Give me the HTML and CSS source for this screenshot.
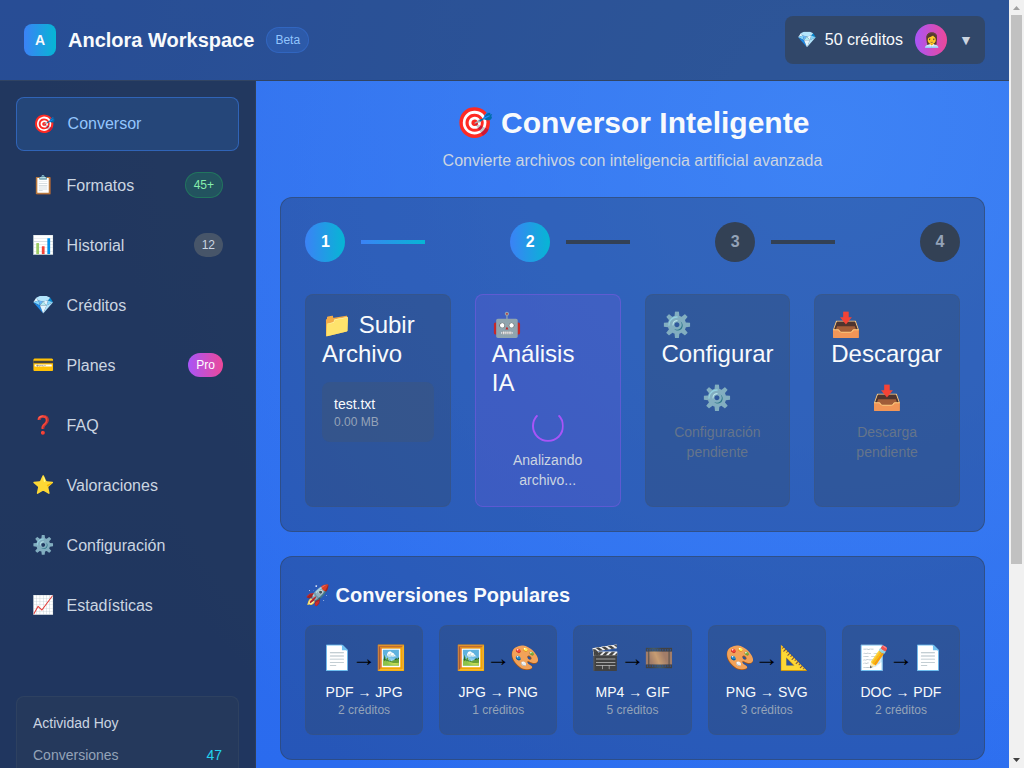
FILE: index.html
```html
<!DOCTYPE html>
<html lang="es">
<head>
<meta charset="utf-8">
<title>Anclora Workspace</title>
<link rel="stylesheet" href="styles.css">
</head>
<body>
<div class="window">
<div class="app">
  <header class="topbar">
    <div class="brand">
      <span class="logo">A</span>
      <span class="brand-name">Anclora Workspace</span>
      <span class="beta">Beta</span>
    </div>
    <div class="account">
      <span class="gem">💎</span>
      <span class="credits">50 créditos</span>
      <span class="avatar">👩‍💼</span>
      <span class="caret">▼</span>
    </div>
  </header>
  <div class="columns">
    <aside class="sidebar">
      <nav class="nav">
        <a class="nav-item active"><span class="nav-icon">🎯</span><span class="nav-label">Conversor</span></a>
        <a class="nav-item"><span class="nav-icon">📋</span><span class="nav-label">Formatos</span><span class="tag tag-green">45+</span></a>
        <a class="nav-item"><span class="nav-icon">📊</span><span class="nav-label">Historial</span><span class="tag tag-gray">12</span></a>
        <a class="nav-item"><span class="nav-icon">💎</span><span class="nav-label">Créditos</span></a>
        <a class="nav-item"><span class="nav-icon">💳</span><span class="nav-label">Planes</span><span class="tag tag-pro">Pro</span></a>
        <a class="nav-item"><span class="nav-icon">❓</span><span class="nav-label">FAQ</span></a>
        <a class="nav-item"><span class="nav-icon">⭐</span><span class="nav-label">Valoraciones</span></a>
        <a class="nav-item"><span class="nav-icon">⚙️</span><span class="nav-label">Configuración</span></a>
        <a class="nav-item"><span class="nav-icon">📈</span><span class="nav-label">Estadísticas</span></a>
      </nav>
      <section class="activity">
        <h3 class="activity-title">Actividad Hoy</h3>
        <div class="activity-row"><span>Conversiones</span><span class="activity-value">47</span></div>
      </section>
    </aside>
    <main class="main">
      <div class="intro">
        <h1 class="title">🎯 Conversor Inteligente</h1>
        <p class="subtitle">Convierte archivos con inteligencia artificial avanzada</p>
      </div>
      <section class="panel">
        <div class="steps">
          <div class="step"><span class="dot on">1</span><span class="bar on"></span></div>
          <div class="step"><span class="dot on">2</span><span class="bar"></span></div>
          <div class="step"><span class="dot">3</span><span class="bar"></span></div>
          <div class="step"><span class="dot">4</span></div>
        </div>
        <div class="stages">
          <div class="card stage">
            <h2 class="stage-title">📁 Subir Archivo</h2>
            <div class="file"><div class="file-name">test.txt</div><div class="file-size">0.00 MB</div></div>
          </div>
          <div class="card stage current">
            <h2 class="stage-title">🤖 Análisis IA</h2>
            <div class="spinner"></div>
            <p class="stage-note light">Analizando archivo...</p>
          </div>
          <div class="card stage">
            <h2 class="stage-title">⚙️ Configurar</h2>
            <div class="stage-icon">⚙️</div>
            <p class="stage-note">Configuración pendiente</p>
          </div>
          <div class="card stage">
            <h2 class="stage-title">📥 Descargar</h2>
            <div class="stage-icon">📥</div>
            <p class="stage-note">Descarga pendiente</p>
          </div>
        </div>
      </section>
      <section class="panel popular">
        <h2 class="popular-title">🚀 Conversiones Populares</h2>
        <div class="popular-grid">
          <div class="card conv"><div class="conv-icons">📄→🖼️</div><div class="conv-name">PDF → JPG</div><div class="conv-cost">2 créditos</div></div>
          <div class="card conv"><div class="conv-icons">🖼️→🎨</div><div class="conv-name">JPG → PNG</div><div class="conv-cost">1 créditos</div></div>
          <div class="card conv"><div class="conv-icons">🎬→🎞️</div><div class="conv-name">MP4 → GIF</div><div class="conv-cost">5 créditos</div></div>
          <div class="card conv"><div class="conv-icons">🎨→📐</div><div class="conv-name">PNG → SVG</div><div class="conv-cost">3 créditos</div></div>
          <div class="card conv"><div class="conv-icons">📝→📄</div><div class="conv-name">DOC → PDF</div><div class="conv-cost">2 créditos</div></div>
        </div>
      </section>
    </main>
  </div>
</div>
<div class="scrollbar">
  <svg class="sb-arrow" width="15" height="15" viewBox="0 0 15 15"><path d="M4 10 7.5 6 11 10z" fill="#a0a0a0"/></svg>
  <span class="sb-thumb"></span>
  <svg class="sb-arrow" width="15" height="15" viewBox="0 0 15 15"><path d="M4 5 11 5 7.5 9z" fill="#404040"/></svg>
</div>
</div>
</body>
</html>
```
FILE: styles.css
```css
* { box-sizing: border-box; margin: 0; padding: 0; }
body { overflow: hidden; font: 16px/24px "Liberation Sans", Arial, sans-serif; color: #f8fafc; }
.window { display: flex; height: 768px; overflow: hidden; }
.app {
  flex: 1;
  min-width: 0;
  display: flex;
  flex-direction: column;
  background: radial-gradient(circle at 82% 18%, rgba(64, 134, 246, .85) 0, rgba(64, 134, 246, 0) 76%), linear-gradient(180deg, #3271ee, #2a6bee);
}
.topbar {
  display: flex;
  flex: none;
  justify-content: space-between;
  align-items: center;
  height: 81px;
  padding: 0 24px;
  background: rgba(30, 41, 59, .5);
  border-bottom: 1px solid rgba(51, 65, 85, .8);
}
.brand { display: flex; align-items: center; gap: 12px; }
.logo {
  width: 32px; height: 32px;
  border-radius: 8px;
  background: linear-gradient(90deg, #3b82f6, #06b6d4);
  font-size: 14px; font-weight: 700; line-height: 32px;
  text-align: center;
}
.brand-name { font-size: 20px; font-weight: 700; line-height: 28px; }
.beta {
  padding: 4px 8px;
  border: 1px solid rgba(59, 130, 246, .3);
  border-radius: 999px;
  background: rgba(59, 130, 246, .2);
  color: #93c5fd;
  font-size: 12px; line-height: 16px;
}
.account {
  display: flex;
  align-items: center;
  height: 48px;
  padding: 0 12px;
  border-radius: 8px;
  background: rgba(51, 65, 85, .7);
}
.gem { width: 20px; margin-right: 8px; }
.avatar {
  width: 32px; height: 32px;
  margin: 0 12px;
  border-radius: 50%;
  background: linear-gradient(90deg, #a855f7, #ec4899);
  font-size: 14px; line-height: 32px;
  text-align: center;
}
.caret { width: 14px; color: #cbd5e1; font-size: 14px; text-align: center; }
.columns { display: flex; flex: 1; min-height: 0; }
.sidebar {
  flex: none;
  display: flex;
  flex-direction: column;
  justify-content: space-between;
  width: 256px;
  padding: 16px;
  background: rgba(30, 41, 59, .8);
  border-right: 1px solid rgba(51, 65, 85, .8);
}
.nav { display: flex; flex-direction: column; gap: 8px; }
.nav-item {
  display: flex;
  align-items: center;
  gap: 12.6px;
  height: 52px;
  padding: 0 16px;
  border-radius: 8px;
  color: #cbd5e1;
}
.nav-item.active {
  height: 54px;
  border: 1px solid rgba(59, 130, 246, .5);
  background: rgba(48, 128, 226, .2);
  color: #93c5fd;
}
.nav-icon { font-size: 18px; line-height: 28px; }
.nav-label { flex: 1; padding-top: .4px; }
.active .nav-label { padding-top: 0; }
.tag { padding: 4px 8px; border-radius: 999px; font-size: 12px; line-height: 16px; }
.tag-green { border: 1px solid rgba(34, 197, 94, .3); background: rgba(34, 197, 94, .2); color: #86efac; }
.tag-gray { background: #475569; color: #cbd5e1; }
.tag-pro { background: linear-gradient(90deg, #a855f7, #ec4899); color: #fff; }
.nav-item:not(.active) { padding-top: .8px; }
.activity {
  flex: none;
  height: 120px;
  margin-bottom: -64px;
  padding: 16px;
  border: 1px solid rgba(71, 85, 105, .3);
  border-radius: 8px;
  background: rgba(51, 65, 85, .3);
  font-size: 14px; line-height: 20px;
}
.activity-title { margin-bottom: 12px; color: #cbd5e1; font-size: 14px; font-weight: 400; }
.activity-row { display: flex; justify-content: space-between; color: #94a3b8; }
.activity-value { color: #22d3ee; }
.main { flex: 1; min-width: 0; padding: 24px; }
.intro { margin-bottom: 24px; text-align: center; }
.title { margin-bottom: 8px; font-size: 30px; font-weight: 700; line-height: 36px; }
.subtitle { color: #cbd5e1; }
.panel {
  padding: 24px;
  border: 1px solid rgba(51, 65, 85, .5);
  border-radius: 12px;
  background: rgba(30, 41, 59, .3);
}
.steps { display: flex; justify-content: space-between; margin-bottom: 32px; padding: .4px 0 0 .4px; }
.step { display: flex; align-items: center; }
.dot {
  width: 40px; height: 40px;
  border-radius: 50%;
  background: #334155;
  color: #94a3b8;
  font-weight: 700; line-height: 40px;
  text-align: center;
}
.bar { width: 64px; height: 4px; margin: 0 16px; background: #334155; }
.dot.on, .bar.on { background: linear-gradient(90deg, #3b82f6, #06b6d4); color: #fff; }
.stages { display: grid; grid-template-columns: repeat(4, minmax(0, 1fr)); gap: 24px; }
.card { border: 1px solid rgba(71, 85, 105, .3); border-radius: 8px; background: rgba(51, 65, 85, .3); }
.stage { height: 212.6px; padding: 16px; }
.stage.current { border-color: rgba(168, 85, 247, .3); background: rgba(168, 85, 247, .13); }
.stage-title { margin-bottom: 13px; font-size: 24px; font-weight: 400; line-height: 28.8px; }
.current .stage-title { margin-bottom: 12px; }
.file { padding: 12px; border-radius: 8px; background: rgba(71, 85, 105, .3); }
.file-name { font-size: 14px; line-height: 20px; }
.file-size { color: #94a3b8; font-size: 12px; line-height: 16px; }
.spinner {
  width: 32px; height: 32px;
  margin: 0 auto 8px;
  border: 2px solid #a855f7;
  border-top-color: transparent;
  border-radius: 50%;
  clip-path: inset(5px 0 0);
}
.stage-icon { margin-bottom: 8px; font-size: 24px; line-height: 32px; text-align: center; }
.stage-note { color: #64748b; font-size: 14px; line-height: 20px; text-align: center; }
.stage-note.light { color: #cbd5e1; }
.popular { margin-top: 24px; }
.popular-title { margin-bottom: 16px; font-size: 20px; font-weight: 700; line-height: 28px; }
.popular-grid { display: grid; grid-template-columns: repeat(5, minmax(0, 1fr)); gap: 16px; }
.conv { height: 110px; padding: 16px 0; text-align: center; }
.conv-icons { margin-bottom: 8px; color: #000; font-size: 24px; line-height: 32px; white-space: nowrap; }
.conv-name { font-size: 14px; line-height: 20px; }
.conv-cost { color: #94a3b8; font-size: 12px; line-height: 16px; }
.scrollbar { display: flex; flex: none; flex-direction: column; align-items: center; width: 15px; background: #f1f1f1; }
.sb-arrow { flex: none; display: block; }
.sb-thumb { width: 11px; height: 549px; margin-bottom: auto; background: #c1c1c1; }
```
